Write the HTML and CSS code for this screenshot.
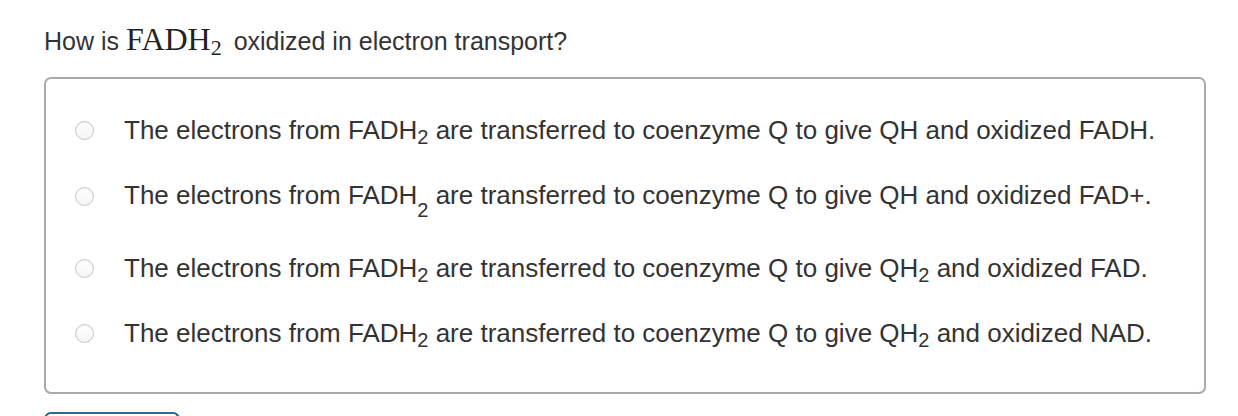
FILE: index.html
```html
<!DOCTYPE html>
<html>
<head>
<meta charset="utf-8">
<link rel="stylesheet" href="styles.css">
</head>
<body>
<div class="page">
  <p class="question">How is <span class="math">FADH<sub class="msub">2</sub></span> oxidized in electron transport?</p>
  <div class="box">
    <label class="opt"><span class="radio"></span><span class="txt">The electrons from FADH<sub class="s">2</sub> are transferred to coenzyme Q to give QH and oxidized FADH.</span></label>
    <label class="opt"><span class="radio"></span><span class="txt">The electrons from FADH<sub class="s low">2</sub> are transferred to coenzyme Q to give QH and oxidized FAD+.</span></label>
    <label class="opt"><span class="radio"></span><span class="txt">The electrons from FADH<sub class="s">2</sub> are transferred to coenzyme Q to give QH<sub class="s">2</sub> and oxidized FAD.</span></label>
    <label class="opt"><span class="radio"></span><span class="txt">The electrons from FADH<sub class="s">2</sub> are transferred to coenzyme Q to give QH<sub class="s">2</sub> and oxidized NAD.</span></label>
  </div>
  <div class="btn"></div>
</div>
</body>
</html>
```
FILE: styles.css
```css
html, body {
  margin: 0;
  padding: 0;
  background: #fff;
}
.page {
  padding: 23px 0 0 44px;
  font-family: "Liberation Sans", Arial, sans-serif;
  color: #333;
  width: 1162px;
}
.question {
  margin: 0;
  font-size: 25px;
  line-height: 32px;
  color: #333;
}
.math {
  font-family: "Liberation Serif", "DejaVu Serif", serif;
  font-size: 32px;
  color: #222;
  margin-right: 5px;
}
.msub {
  font-size: 22px;
  vertical-align: -5px;
  line-height: 0;
}
.box {
  margin-top: 20px;
  border: 2px solid #aaa;
  border-radius: 7px;
  padding: 19px 0 28px 0;
  height: 266px;
  box-sizing: content-box;
}
.opt {
  display: flex;
  align-items: center;
  padding: 20px 0 20px 29px;
  line-height: 25px;
  font-size: 26px;
  color: #333;
}
.radio {
  width: 17px;
  height: 17px;
  border: 1px solid #c8c8c8;
  border-radius: 50%;
  background: linear-gradient(#fff, #f4f4f4);
  box-shadow: inset 0 1px 1px rgba(0,0,0,0.06);
  margin-right: 30px;
  flex: none;
}
.s {
  font-size: 20px;
  line-height: 0;
  vertical-align: -5px;
}
.s.low {
  vertical-align: -13px;
}
.opt:nth-child(2) {
  padding-bottom: 26px;
}
.btn {
  margin-top: 18px;
  width: 136px;
  height: 20px;
  border: 2px solid #2f6a8a;
  border-bottom: none;
  border-radius: 7px 7px 0 0;
  box-sizing: border-box;
}
```
